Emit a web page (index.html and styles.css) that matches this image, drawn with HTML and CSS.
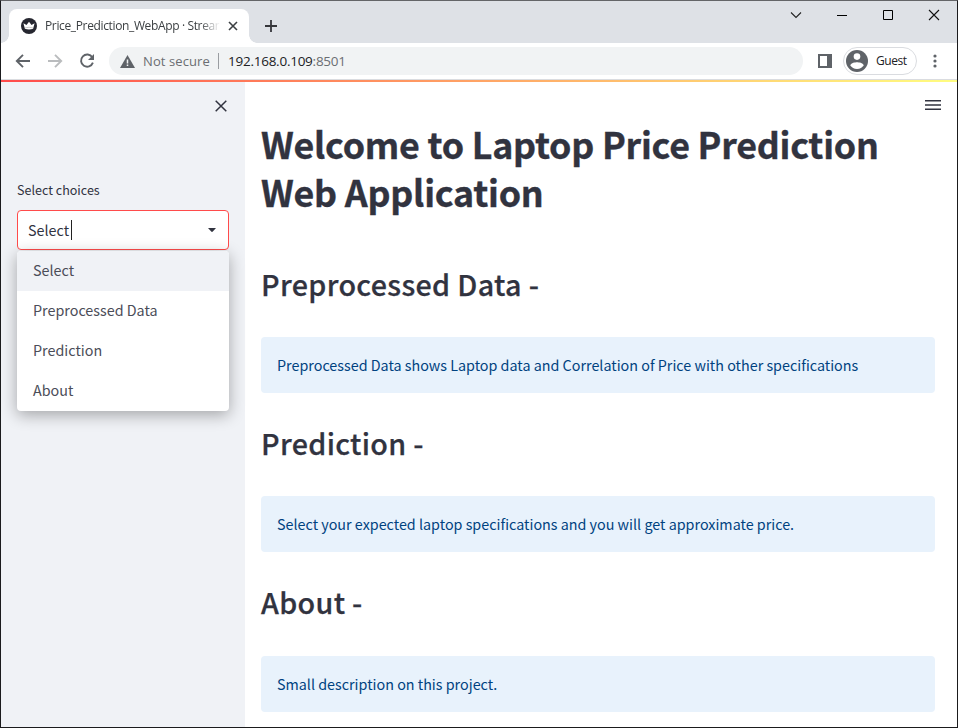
FILE: index.html
```html
<!DOCTYPE html>
<html lang="en">
<head>
<meta charset="utf-8">
<title>Price_Prediction_WebApp · Streamlit</title>
<link rel="stylesheet" href="styles.css">
</head>
<body>
<div class="window">
  <header class="tabstrip">
    <div class="tab">
      <svg class="favicon" width="16" height="16" viewBox="0 0 16 16"><circle cx="8" cy="8" r="8" fill="#262730"/><path d="M2.400 5.200L5.500 7 8 3.800 10.500 7l3.100-1.800-1.500 5.600Q8 12.100 3.900 10.800z" fill="#fff"/><path d="M4 9.900Q8 8.600 12 9.900" fill="none" stroke="#aaa" stroke-width=".6"/></svg>
      <span class="tab-title">Price_Prediction_WebApp · Strear</span>
      <svg class="tab-close" width="10" height="10" viewBox="0 0 10 10"><path d="M1 1l8 8M9 1l-8 8" stroke="#3c4043" stroke-width="1.600"/></svg>
    </div>
    <svg class="new-tab" width="12" height="12" viewBox="0 0 12 12"><path d="M6 0v12M0 6h12" stroke="#35363a" stroke-width="1.800"/></svg>
    <div class="controls">
      <svg width="12" height="12" viewBox="0 0 12 12"><path d="M1 3.500l5 5 5-5" fill="none" stroke="#222" stroke-width="1.100"/></svg>
      <svg width="12" height="12" viewBox="0 0 12 12"><path d="M1 6.500h10" stroke="#000"/></svg>
      <svg width="12" height="12" viewBox="0 0 12 12"><path d="M1.500 1.500h9v9h-9z" fill="none" stroke="#000"/></svg>
      <svg width="12" height="12" viewBox="0 0 12 12"><path d="M1 1l10 10M11 1L1 11" stroke="#111" stroke-width="1.100"/></svg>
    </div>
  </header>
  <div class="toolbar">
    <svg class="nav" width="16" height="16" viewBox="0 0 16 16"><path d="M15 8H2.500M8 1.800L1.800 8 8 14.200" fill="none" stroke="#5f6368" stroke-width="1.900"/></svg>
    <svg class="nav" width="16" height="16" viewBox="0 0 16 16"><path d="M1 8h12.500M8 1.800L14.200 8 8 14.200" fill="none" stroke="#babcbe" stroke-width="1.900"/></svg>
    <svg class="nav" width="16" height="16" viewBox="0 0 16 16"><path d="M13.300 4.300A6.100 6.100 0 1 0 13.900 9.700" fill="none" stroke="#5f6368" stroke-width="1.900"/><path d="M15 1v6H9z" fill="#5f6368"/></svg>
    <div class="omnibox">
      <svg width="15" height="13" viewBox="0 0 15 13"><path d="M7.500 0L15 13H0z" fill="#5f6368"/><path d="M7.500 4.500v4M7.500 9.500v1.500" stroke="#f1f3f4" stroke-width="1.500"/></svg>
      <span class="insecure">Not secure</span>
      <i class="sep"></i>
      <span class="url">192.168.0.109<span class="port">:8501</span></span>
    </div>
    <svg class="panel" width="14" height="14" viewBox="0 0 14 14"><path fill-rule="evenodd" d="M0 0h14v14H0zM2 2v10h7V2z" fill="#5f6368"/></svg>
    <div class="profile">
      <svg width="22" height="22" viewBox="0 0 22 22"><circle cx="11" cy="11" r="11" fill="#5f6368"/><circle cx="11" cy="6.600" r="3.300" fill="#fff"/><path d="M4.200 15.300C5.300 12.900 9 12.300 11 12.300s5.700.6 6.800 3C16.300 17.700 14 19 11 19s-5.300-1.300-6.800-3.700z" fill="#fff"/></svg>
      <span class="guest">Guest</span>
    </div>
    <svg class="more" width="4" height="14" viewBox="0 0 4 14"><g fill="#5f6368"><circle cx="2" cy="2" r="1.600"/><circle cx="2" cy="7" r="1.600"/><circle cx="2" cy="12" r="1.600"/></g></svg>
  </div>
  <div class="decoration"></div>
  <div class="app">
    <aside class="sidebar">
      <svg class="side-close" width="12" height="12" viewBox="0 0 12 12"><path d="M.7.7l10.600 10.600M11.300.7L.7 11.300" stroke="#31333f" stroke-width="1.500"/></svg>
      <div class="label">Select choices</div>
      <div class="select">
        <span class="value">Select</span><i class="caret"></i>
        <svg class="arrow" width="8" height="4" viewBox="0 0 8 4"><path d="M0 0h8L4.800 3.600Q4 4.300 3.200 3.600z" fill="#31333f"/></svg>
        <ul class="menu">
          <li class="active">Select</li>
          <li>Preprocessed Data</li>
          <li>Prediction</li>
          <li>About</li>
        </ul>
      </div>
    </aside>
    <main class="main">
      <svg class="burger" width="16" height="10" viewBox="0 0 16 10"><path d="M0 .75h16M0 5h16M0 9.250h16" stroke="#31333f" stroke-width="1.500"/></svg>
      <h1>Welcome to Laptop Price Prediction<br>Web Application</h1>
      <h2 class="h-pre">Preprocessed Data -</h2>
      <div class="info">Preprocessed Data shows Laptop data and Correlation of Price with other specifications</div>
      <h2>Prediction -</h2>
      <div class="info">Select your expected laptop specifications and you will get approximate price.</div>
      <h2>About -</h2>
      <div class="info">Small description on this project.</div>
    </main>
  </div>
</div>
</body>
</html>
```

FILE: styles.css
```css
* { box-sizing: border-box; }
body { margin: 0; font-family: "Noto Sans CJK SC", "Noto Sans", sans-serif; color: #31333f; }
svg { display: block; flex: none; }
.window { width: 958px; height: 728px; border: 1px solid #1b1b1d; border-top-color: #646568; background: #fff; overflow: hidden; display: flex; flex-direction: column; }
.tabstrip { height: 42px; flex: none; background: #dee1e6; display: flex; padding-left: 8px; font-family: "Open Sans", sans-serif; }
.tab { position: relative; width: 240px; height: 34px; margin-top: 8px; background: #fff; border-radius: 8px 8px 0 0; display: flex; align-items: center; padding: 0 11px 0 12px; }
.tab::before, .tab::after { content: ""; position: absolute; bottom: 0; width: 8px; height: 8px; }
.tab::before { left: -8px; background: radial-gradient(circle at 0 0, transparent 7.500px, #fff 8px); }
.tab::after { right: -8px; background: radial-gradient(circle at 100% 0, transparent 7.500px, #fff 8px); }
.tab-title { width: 176px; margin-left: 8px; font-size: 12px; letter-spacing: -.36px; line-height: 18px; white-space: nowrap; color: #3c4043; -webkit-mask-image: linear-gradient(90deg, #000 155px, transparent 175px); mask-image: linear-gradient(90deg, #000 155px, transparent 175px); }
.tab-close { margin-left: auto; }
.new-tab { margin: 19px 0 0 16px; }
.controls { display: flex; gap: 34px; margin: 8px 17px 0 auto; }
.toolbar { height: 37px; flex: none; display: flex; align-items: center; border-bottom: 1px solid #dadce0; padding-left: 14px; font-family: "Open Sans", sans-serif; }
.nav { margin-right: 16px; }
.omnibox { width: 694px; height: 28px; margin-left: -2px; border-radius: 14px; background: #f1f3f4; display: flex; align-items: center; padding-left: 11px; }
.insecure { margin-left: 8px; color: #6b6e72; width: 68px; font-size: 13px; letter-spacing: .1px; white-space: nowrap; }
.sep { width: 1px; height: 16px; background: #9a9da1; margin: 0 9px 0 7px; }
.url { font-size: 13.500px; color: #202124; letter-spacing: -.25px; }
.port { color: #6b6e72; }
.panel { margin-left: 15px; }
.profile { width: 74px; height: 28px; margin-left: 11px; border: 1px solid #dadce0; border-radius: 14px; display: flex; align-items: center; padding-left: 2px; }
.guest { margin-left: 8px; padding-bottom: 1px; font-size: 12px; letter-spacing: -.45px; color: #202124; }
.more { margin-left: 16px; }
.decoration { height: 2px; flex: none; background: linear-gradient(90deg, #ff4b4b, #fffd80); }
.app { flex: 1; display: flex; min-height: 0; }
.sidebar { width: 244px; flex: none; background: #f0f2f6; padding: 18px 16px 0; }
.side-close { margin-left: 198px; }
.label { margin-top: 68px; height: 20px; line-height: 20px; font-size: 12.550px; }
.select { position: relative; width: 212px; height: 40px; margin-top: 10px; border: 1px solid #ff4b4b; border-radius: 4px; background: #fff; display: flex; align-items: center; padding: 0 12px 0 10px; font-size: 14.330px; }
.value { line-height: 24px; padding-bottom: 1px; }
.caret { width: 1px; height: 20px; background: #222; margin-left: 2px; }
.arrow { margin-left: auto; }
.menu { position: absolute; left: -1px; top: 40px; width: 212px; margin: 0; padding: 0; list-style: none; background: #fff; border-radius: 4px; overflow: hidden; box-shadow: 0 4px 16px rgba(0,0,0,.32); color: #4b4d58; }
.menu li { height: 40px; line-height: 38px; padding-left: 16px; }
.menu .active { background: #f0f2f6; }
.main { position: relative; flex: 1; padding: 37px 22px 0 16px; }
.burger { position: absolute; left: 680px; top: 18px; }
h1 { margin: 0; font-size: 35.800px; line-height: 48px; font-weight: 700; letter-spacing: -.24px; -webkit-text-stroke: .35px #31333f; white-space: nowrap; }
h2 { font-size: 28.700px; line-height: 40px; font-weight: 500; letter-spacing: .33px; -webkit-text-stroke: .25px #31333f; margin: 29.900px 0 33.500px; white-space: nowrap; }
.h-pre { margin-top: 48.500px; }
.info { height: 56px; border-radius: 4px; background: #e8f2fc; color: #004280; font-size: 14.330px; line-height: 24px; padding: 16px; white-space: nowrap; }
```
